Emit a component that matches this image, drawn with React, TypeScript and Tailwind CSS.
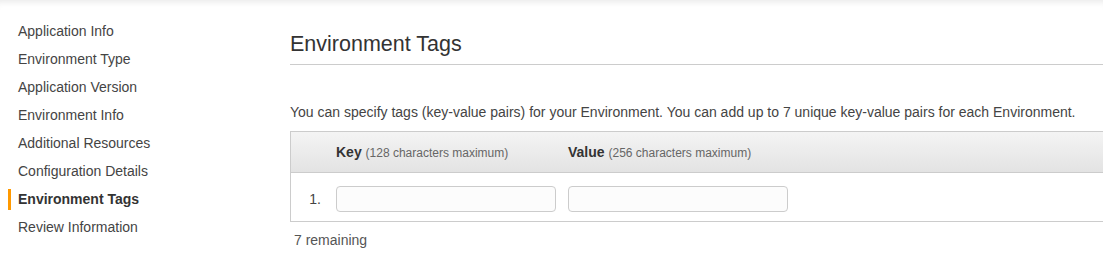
const steps = [
  "Application Info",
  "Environment Type",
  "Application Version",
  "Environment Info",
  "Additional Resources",
  "Configuration Details",
  "Environment Tags",
  "Review Information",
];

const active = "Environment Tags";

export default function App() {
  return (
    <div
      className="flex h-[267px] w-[1103px] overflow-hidden bg-white text-[#444] shadow-[inset_0_7px_6px_-5px_rgba(0,0,0,0.09)]"
      style={{ fontFamily: '"Liberation Sans", Arial, sans-serif' }}
    >
      {/* Wizard steps */}
      <nav className="w-[290px] shrink-0 pt-[21px]">
        <ul className="flex flex-col gap-[7px]">
          {steps.map((s) => (
            <li
              key={s}
              className={
                s === active
                  ? "ml-[8px] border-l-[3px] border-[#f90] pl-[7px] text-[14px] leading-[21px] font-bold text-[#333]"
                  : "ml-[8px] border-l-[3px] border-transparent pl-[7px] text-[14px] leading-[21px]"
              }
            >
              {s}
            </li>
          ))}
        </ul>
      </nav>

      {/* Main */}
      <main className="flex-1 pt-[32px]">
        <h2 className="pb-[8px] text-[21.5px] leading-[24px] text-[#333]">Environment Tags</h2>
        <div className="border-t border-[#ccc]" />

        <p className="mt-[37px] text-[14px] leading-[20px]">
          You can specify tags (key-value pairs) for your Environment. You can add up to 7 unique key-value pairs for each
          Environment.
        </p>

        <div className="mt-[9px] border border-r-0 border-[#ccc]">
          <div className="flex h-[41px] items-center border-b border-[#ccc] bg-gradient-to-b from-[#f4f4f4] to-[#e3e3e3]">
            <div className="w-[45px]" />
            <div className="w-[232px] text-[14px]">
              <span className="font-bold text-[#333]">Key</span>{" "}
              <span className="text-[12px] text-[#666]">(128 characters maximum)</span>
            </div>
            <div className="text-[14px]">
              <span className="font-bold text-[#333]">Value</span>{" "}
              <span className="text-[12px] text-[#666]">(256 characters maximum)</span>
            </div>
          </div>
          <div className="flex h-[48px] items-start pt-[13px]">
            <div className="w-[45px] pr-[15px] text-right text-[14px] leading-[26px]">1.</div>
            <input className="h-[26px] w-[220px] rounded-[4px] border border-[#ccc] bg-[#fcfcfc] outline-none" />
            <input className="ml-[12px] h-[26px] w-[220px] rounded-[4px] border border-[#ccc] bg-[#fcfcfc] outline-none" />
          </div>
        </div>

        <div className="mt-[9px] pl-[4px] text-[14px] leading-[18px] text-[#555]">7 remaining</div>
      </main>
    </div>
  );
}
